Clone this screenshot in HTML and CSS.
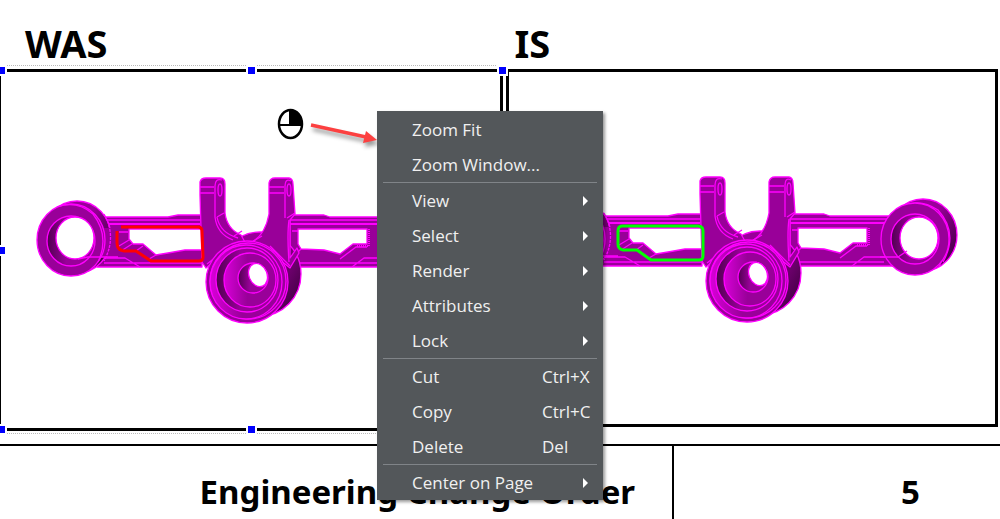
FILE: index.html
```
<!DOCTYPE html>
<html lang="en">

<head>
    <meta charset="UTF-8">
    <meta name="viewport" content="width=device-width, initial-scale=1.0">
    <title>Engineering Change Order</title>
    <link rel="stylesheet" href="styles.css">
</head>

<body>
    <!-- the control arm, shared by both views -->
    <svg class="defs" aria-hidden="true">
        <defs>
            <linearGradient id="bore" x1="0" x2="1">
                <stop offset="0" stop-color="#d800d8" />
                <stop offset="0.45" stop-color="#990099" />
                <stop offset="1" stop-color="#990099" />
            </linearGradient>
            <linearGradient id="shade" x1="0" x2="1" y1="0.2" y2="0.8">
                <stop offset="0.5" stop-color="#990099" />
                <stop offset="1" stop-color="#400040" />
            </linearGradient>
            <linearGradient id="recess" x1="0" x2="1">
                <stop offset="0" stop-color="#500050" />
                <stop offset="0.4" stop-color="#990099" />
            </linearGradient>
        </defs>
        <symbol id="arm" viewBox="22 168 460 164">
            <g fill="#990099" stroke="#ff00ff" stroke-width="1.3" stroke-linejoin="round">
                <!-- beams -->
                <path fill-rule="evenodd" d="M98 217H168L178 215H202V267H97ZM129 229V239L133 244H143L156 255L168 253L185 250H202V229Z" />
                <path fill-rule="evenodd" d="M290 215H324L330 217H396V267H290ZM298 229V244L301 249L324 250L340 254L353 244H367V229Z" />
                <path fill="none" d="M104 220H200M104 263H206M98 258H125L140 267M119 232H128M119 246L129 240M121 251L132 244M136 251L143 246M149 259L156 255M290 220H392M290 263H384M398 258H364L352 267M340 259L356 247H367M292 231H298M293 257L301 249" />
                <path fill="none" stroke-width="2" d="M104 224H200M290 224H392" />
                <path fill="none" stroke-width="2" stroke-dasharray="1 1" d="M369 229V246H356" />

                <!-- left eye -->
                <ellipse cx="77" cy="237" rx="34" ry="36" fill="url(#shade)" />
                <path stroke="none" d="M96 228H118V257H96Z" />
                <path fill="none" d="M104 214Q117 237 104 261" stroke-dasharray="3 1" />
                <ellipse cx="71" cy="240" rx="34" ry="36" />
                <path fill="none" d="M57 207Q77 200 93 214Q110 236 98 262" />
                <ellipse cx="71" cy="241" rx="24" ry="25" fill="url(#recess)" />
                <ellipse cx="75" cy="238" rx="19" ry="21" fill="#ffffff" />
                <path fill="none" d="M78 259L88 257H118" />

                <!-- right eye -->
                <ellipse cx="423" cy="236" rx="34" ry="36" fill="url(#shade)" />
                <path fill="none" d="M404 207Q420 199 438 211Q459 234 443 263" />
                <path fill="none" d="M407 206Q423 201 436 215Q454 236 439 268" />
                <ellipse cx="415" cy="240" rx="34" ry="36" />
                <ellipse cx="415" cy="240" rx="24" ry="25" fill="url(#recess)" />
                <ellipse cx="419" cy="239" rx="19" ry="21" fill="#ffffff" />
                <path fill="none" d="M380 258H398L407 252" />

                <!-- boss, back half -->
                <ellipse cx="260" cy="274" rx="41" ry="42" fill="url(#shade)" />

                <!-- fork -->
                <path d="M200 195V182Q201 178 206 178H220Q225 178 225 184V213Q227 229 241 235L246 244L228 250L206 268L202 262Z" />
                <path d="M250 243Q265 236 269 214V183Q270 178 275 178H289Q293 179 293 184L295 214L290 220V258L297 248L299 253L290 268L275 256Z" />
                <path fill="none" d="M200 187H214M200 193H214M215 217V186Q215 178 222 180M217 217L224 213M215 217Q217 234 233 240M217 217Q220 233 238 238M269 187H284M269 193H284M285 218V186Q285 178 291 181M287 218L295 213M289 220Q287 234 289 262M250 243L262 236M207 264L230 246M290 266L270 246M234 236L242 231" />
                <ellipse cx="220" cy="190" rx="2" ry="6" />
                <ellipse cx="289" cy="190" rx="2" ry="6" />

                <!-- boss, front half -->
                <ellipse cx="247" cy="282" rx="41" ry="41" />
                <ellipse cx="248" cy="281" rx="38" ry="38" fill="none" />
                <ellipse cx="246" cy="282" rx="36" ry="37" fill="url(#bore)" />
                <ellipse cx="247" cy="280" rx="31" ry="32" fill="url(#recess)" />
                <ellipse cx="250" cy="280" rx="26" ry="27" fill="url(#bore)" />
                <ellipse cx="253" cy="278" rx="15" ry="15" fill="url(#recess)" />
                <ellipse cx="258" cy="275" rx="9" ry="12" fill="#ffffff" transform="rotate(-22 258 275)" />
            </g>
        </symbol>
    </svg>

    <main class="sheet">
        <section class="views">
            <div class="view">
                <h2>WAS</h2>
                <div class="frame is-selected">
                    <svg class="arm" viewBox="22 168 460 164" role="img" aria-label="Control arm, old pocket">
                        <use href="#arm" x="22" y="168" width="460" height="164" />
                        <path class="pocket old" d="M121 227H198Q202 227 202 231L203 257Q203 261 199 261H151L136 251H124Q117 250 117 243V231" />
                    </svg>
                    <span class="handle top left"></span>
                    <span class="handle top center"></span>
                    <span class="handle top right"></span>
                    <span class="handle middle left"></span>
                    <span class="handle bottom left"></span>
                    <span class="handle bottom center"></span>
                </div>
            </div>
            <div class="view">
                <h2>IS</h2>
                <div class="frame">
                    <svg class="arm" viewBox="22 168 460 164" role="img" aria-label="Control arm, new pocket">
                        <use href="#arm" x="22" y="168" width="460" height="164" />
                        <path class="pocket new" d="M122 227H198Q203 227 203 232V257Q203 261 199 261H151L137 251H123Q118 250 118 245V232Q118 227 122 227Z" />
                    </svg>
                </div>
            </div>
        </section>

        <footer class="title-block">
            <div class="title">Engineering Change Order</div>
            <div class="number">5</div>
        </footer>

        <svg class="callout" viewBox="0 0 106 48" aria-hidden="true">
            <ellipse cx="19.500" cy="18" rx="11.500" ry="14" fill="none" stroke="#000000" stroke-width="2.500" />
            <path d="M8 19H31M19 4V18" fill="none" stroke="#000000" stroke-width="2" />
            <path d="M19 4V19H31Q31 6 19 4Z" fill="#000000" />
            <g class="arrow">
                <path d="M40 19L95 31" fill="none" stroke="#fc4040" stroke-width="3.500" />
                <path d="M95 25L106 34L92 37Z" fill="#fc4040" />
            </g>
        </svg>

        <div class="menu" role="menu">
            <button role="menuitem">Zoom Fit</button>
            <button role="menuitem">Zoom Window...</button>
            <hr>
            <button role="menuitem" class="submenu">View</button>
            <button role="menuitem" class="submenu">Select</button>
            <button role="menuitem" class="submenu">Render</button>
            <button role="menuitem" class="submenu">Attributes</button>
            <button role="menuitem" class="submenu">Lock</button>
            <hr>
            <button role="menuitem">Cut <kbd>Ctrl+X</kbd></button>
            <button role="menuitem">Copy <kbd>Ctrl+C</kbd></button>
            <button role="menuitem">Delete <kbd>Del</kbd></button>
            <hr>
            <button role="menuitem" class="submenu">Center on Page</button>
        </div>
    </main>
</body>

</html>
```
FILE: styles.css
```
:root {
    --ink: #000000;
    --menu-bg: #53575a;
    --menu-text: #f0f0f0;
    --menu-line: #808488;
    --handle: #0000ff;
}

* {
    box-sizing: border-box;
}

body {
    margin: 0;
    background-color: #fff;
    color: var(--ink);
    font-family: "Noto Sans", "Open Sans", sans-serif;
}

.defs {
    position: absolute;
    width: 0;
    height: 0;
}

.sheet {
    position: relative;
    display: flex;
    flex-direction: column;
    min-height: 100vh;
    overflow: hidden;
}

.views {
    display: grid;
    grid-template-columns: 42fr 41fr;
    gap: 3px;
    align-items: start;
    padding-right: 2px;
    margin-bottom: 13px;
}

.view h2 {
    margin: 0;
    padding: 19px 0 2px 25px;
    font-size: 38px;
    line-height: 48px;
    font-weight: 700;
}

.view + .view h2 {
    padding-left: 8px;
}

.frame {
    position: relative;
    display: flex;
    justify-content: center;
    padding: 95px 0 93px;
    border: 3px solid var(--ink);
}

.frame.is-selected {
    padding: 96px 0 96px 2px;
    border-left-width: 1px;
}

.frame.is-selected::before,
.frame.is-selected::after {
    content: '';
    position: absolute;
    left: 0;
    right: 0;
    border-top: 1px dotted #bbb;
}

.frame.is-selected::before {
    top: -7px;
}

.frame.is-selected::after {
    bottom: -6px;
}

.arm {
    width: 460px;
    max-width: 100%;
}

.pocket {
    fill: none;
    stroke-width: 3;
    stroke-linejoin: round;
}

.pocket.old {
    stroke: #ff0000;
}

.pocket.new {
    stroke: #00ff00;
}

.handle {
    position: absolute;
    z-index: 1;
    width: 7px;
    height: 7px;
    margin: -3px 0 0 -3px;
    background-color: var(--handle);
    box-shadow: 0 0 0 2px #fff;
}

.handle.top {
    top: -2px;
}

.handle.middle {
    top: 50%;
}

.handle.bottom {
    top: calc(100% + 1px);
}

.handle.left {
    left: 0;
}

.handle.center {
    left: 50%;
}

.handle.right {
    left: calc(100% + 2px);
}

.title-block {
    flex: 1;
    display: grid;
    grid-template-columns: 41fr 20fr;
    border-top: 2px solid var(--ink);
    font-size: 33px;
    line-height: 40px;
    font-weight: 700;
    text-align: right;
}

.title {
    padding: 26px 37px 0 0;
}

.number {
    padding: 26px 80px 0 0;
    border-left: 2px solid var(--ink);
}

/* right-click pointer */
.callout {
    position: absolute;
    top: 106px;
    left: 271px;
    width: 106px;
}

.arrow {
    filter: drop-shadow(2px 4px 2px rgba(0, 0, 0, 0.4));
}

.menu {
    position: absolute;
    z-index: 2;
    top: 111px;
    left: 377px;
    width: 226px;
    padding-top: 1px;
    background-color: var(--menu-bg);
    box-shadow: 2px 2px 3px rgba(0, 0, 0, 0.4);
}

.menu button {
    display: flex;
    align-items: center;
    justify-content: space-between;
    width: 100%;
    height: 35px;
    padding: 0 15px 0 35px;
    border: 0;
    background-color: transparent;
    color: var(--menu-text);
    font-family: "Open Sans", "Noto Sans", sans-serif;
    font-size: 17px;
    line-height: 24px;
    text-align: left;
}

.menu button:hover,
.menu button:focus {
    outline: none;
    background-color: #66696c;
}

.menu kbd {
    width: 46px;
    font: inherit;
    white-space: nowrap;
}

.menu hr {
    height: 1px;
    margin: 0 6px;
    border: 0;
    background-color: var(--menu-line);
}

.submenu::after {
    content: '';
    border-style: solid;
    border-width: 5px 0 5px 5px;
    border-color: transparent transparent transparent #fff;
}
```
